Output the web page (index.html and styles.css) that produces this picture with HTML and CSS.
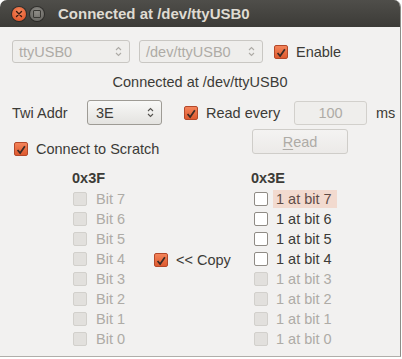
FILE: index.html
```html
<!DOCTYPE html>
<html lang="en">
<head>
    <meta charset="UTF-8">
    <title>Connected at /dev/ttyUSB0</title>
    <link rel="stylesheet" href="styles.css">
</head>
<body>
    <div class="window">
        <div class="titlebar">
            <span class="wbtn wbtn-close">
                <svg width="8" height="8" viewBox="0 0 8 8"><path d="M1.5 1.5 L6.5 6.5 M6.5 1.5 L1.5 6.5" stroke="#3a1a10" stroke-width="1.4" stroke-linecap="round"/></svg>
            </span>
            <span class="wbtn wbtn-min"><span class="sq"></span></span>
            <span class="title">Connected at /dev/ttyUSB0</span>
        </div>

        <div class="content">
            <div class="row row-port">
                <div class="combo disabled port-name">ttyUSB0<span class="arrows"><svg width="7" height="11" viewBox="0 0 7 11"><path d="M1 4 L3.5 1.5 L6 4 M1 7 L3.5 9.5 L6 7" fill="none" stroke="currentColor" stroke-width="1.1"/></svg></span></div>
                <div class="combo disabled port-path">/dev/ttyUSB0<span class="arrows"><svg width="7" height="11" viewBox="0 0 7 11"><path d="M1 4 L3.5 1.5 L6 4 M1 7 L3.5 9.5 L6 7" fill="none" stroke="currentColor" stroke-width="1.1"/></svg></span></div>
                <label class="check"><span class="box checked"></span>Enable</label>
            </div>

            <div class="status">Connected at /dev/ttyUSB0</div>

            <div class="row row-twi">
                <span class="twi-label">Twi Addr</span>
                <div class="combo spin">3E<span class="arrows"><svg width="7" height="11" viewBox="0 0 7 11"><path d="M1 4 L3.5 1.5 L6 4 M1 7 L3.5 9.5 L6 7" fill="none" stroke="currentColor" stroke-width="1.1"/></svg></span></div>
                <label class="check read-every"><span class="box checked"></span>Read every</label>
                <div class="field disabled">100</div>
                <span class="unit">ms</span>
            </div>

            <div class="row row-read">
                <label class="check scratch"><span class="box checked"></span>Connect to Scratch</label>
                <button class="btn" disabled><u>R</u>ead</button>
            </div>

            <div class="bits">
                <div class="col col-left" id="colLeft">
                    <div class="col-head">0x3F</div>
                </div>
                <div class="copy">
                    <label class="check"><span class="box checked"></span>&lt;&lt; Copy</label>
                </div>
                <div class="col col-right" id="colRight">
                    <div class="col-head">0x3E</div>
                </div>
            </div>
        </div>
    </div>

    <script>
        const left = document.getElementById("colLeft");
        const right = document.getElementById("colRight");

        for (let bit = 7; bit >= 0; bit--) {
            left.innerHTML += `
                <label class="check bit disabled"><span class="box"></span>Bit ${bit}</label>`;

            const enabled = bit >= 4;
            right.innerHTML += `
                <label class="check bit ${enabled ? "" : "disabled"}"><span class="box"></span><span class="bit-text ${bit === 7 ? "hot" : ""}">1 at bit ${bit}</span></label>`;
        }

        // checked boxes get a tick
        document.querySelectorAll(".box.checked").forEach(function (box) {
            box.innerHTML = '<svg width="14" height="14" viewBox="0 0 14 14"><path d="M3 7 L6 10.5 L11.5 2.5" fill="none" stroke="#3b2b26" stroke-width="2"/></svg>';
        });
    </script>
</body>
</html>
```

FILE: styles.css
```css
/* Page */
html, body {
    margin: 0;
    padding: 0;
    background: #ffffff;
}

body {
    font-family: "Liberation Sans", Arial, sans-serif;
    font-size: 14.5px;
    color: #3c3b37;
}

/* Window frame */
.window {
    width: 400px;
    height: 356px;
    background: #f2f1f0;
    border-right: 1px solid #8e8c88;
    border-bottom: 1px solid #b0aea9;
    border-radius: 7px 7px 0 0;
    overflow: hidden;
}

.titlebar {
    height: 27px;
    background: linear-gradient(#4f4e4a, #3c3b37);
    display: flex;
    align-items: center;
    padding-left: 12px;
}

.wbtn {
    width: 14px;
    height: 14px;
    border-radius: 50%;
    display: flex;
    align-items: center;
    justify-content: center;
    box-shadow: 0 0 0 1px rgba(0, 0, 0, 0.35);
}

.wbtn-close {
    background: radial-gradient(circle at 50% 35%, #f58a5e, #df4a1f);
}

.wbtn-min {
    margin-left: 4px;
    background: radial-gradient(circle at 50% 35%, #8f8d88, #5f5e5a);
}

.wbtn-min .sq {
    width: 6px;
    height: 6px;
    border: 1px solid #3a3935;
    border-radius: 1px;
}

.title {
    margin-left: 14px;
    font-weight: bold;
    font-size: 15px;
    color: #dfdbd2;
}

/* Content */
.content {
    padding-left: 12px;
}

.row {
    display: flex;
    align-items: center;
}

.row-port {
    margin-top: 13px;
    height: 23px;
}

.combo {
    height: 23px;
    box-sizing: border-box;
    border: 1px solid #c9c7c3;
    border-radius: 3px;
    display: flex;
    align-items: center;
    padding-left: 6px;
}

.combo .arrows {
    margin-left: auto;
    margin-right: 7px;
    display: flex;
}

.combo.disabled {
    background: #efeeec;
    color: #aeaba6;
}

.port-name {
    width: 118px;
}

.port-path {
    width: 124px;
    margin-left: 9px;
}

.row-port .check {
    margin-left: 11px;
}

.status {
    margin-top: 10px;
    height: 18px;
    line-height: 18px;
    text-align: center;
    padding-right: 12px;
}

.row-twi {
    margin-top: 9px;
    height: 25px;
}

.twi-label {
    width: 75px;
}

.spin {
    width: 75px;
    height: 25px;
    border-color: #9e9b95;
    background: linear-gradient(#f8f8f7, #e4e3e0);
    color: #3c3b37;
    padding-left: 8px;
}

.spin .arrows {
    color: #55534f;
}

.read-every {
    margin-left: 22px;
    width: 110px;
}

.field {
    width: 73px;
    height: 24px;
    box-sizing: border-box;
    border: 1px solid #d2d0cc;
    border-radius: 3px;
    display: flex;
    align-items: center;
    justify-content: center;
}

.field.disabled {
    background: #efeeec;
    color: #aeaba6;
}

.unit {
    margin-left: 9px;
}

.row-read {
    margin-top: 4px;
    height: 31px;
    align-items: flex-start;
}

.scratch {
    margin-top: 11px;
    margin-left: 2px;
}

.btn {
    margin-left: auto;
    margin-right: 52px;
    width: 96px;
    height: 25px;
    border: 1px solid #cfcdc9;
    border-radius: 3px;
    background: linear-gradient(#f4f3f2, #eceae8);
    font: inherit;
    color: #aeaba6;
    padding: 0;
}

.btn u {
    text-decoration-thickness: 1px;
    text-underline-offset: 2px;
}

/* Checkboxes */
.check {
    display: flex;
    align-items: center;
    gap: 8px;
    height: 18px;
}

.box {
    width: 14px;
    height: 14px;
    box-sizing: border-box;
    border: 1px solid #8f8b85;
    border-radius: 2px;
    background: #ffffff;
    display: flex;
}

.box.checked {
    border-color: #b4482a;
    background: linear-gradient(#f4845a, #de5a2f);
}

.check.disabled {
    color: #aeaba6;
}

.check.disabled .box {
    background: #e2e0dd;
    border-color: #d2d0cc;
}

/* Bit columns */
.bits {
    display: flex;
    align-items: center;
    padding-left: 60px;
    margin-top: 8px;
}

.col-head {
    height: 21px;
    line-height: 20px;
    font-weight: bold;
}

.col .bit {
    height: 20px;
}

.col-left {
    width: 82px;
}

.col-left .box {
    margin-left: 1px;
}

.col-left .bit {
    gap: 9px;
}

.copy {
    width: 97px;
    padding-top: 2px;
}

.col-right .box {
    margin-left: 3px;
}

.col-right .bit {
    gap: 5px;
}

.bit-text {
    padding: 1px 5px 1px 3px;
}

.bit-text.hot {
    background: #f2dacf;
    color: #5e4c47;
}
```
